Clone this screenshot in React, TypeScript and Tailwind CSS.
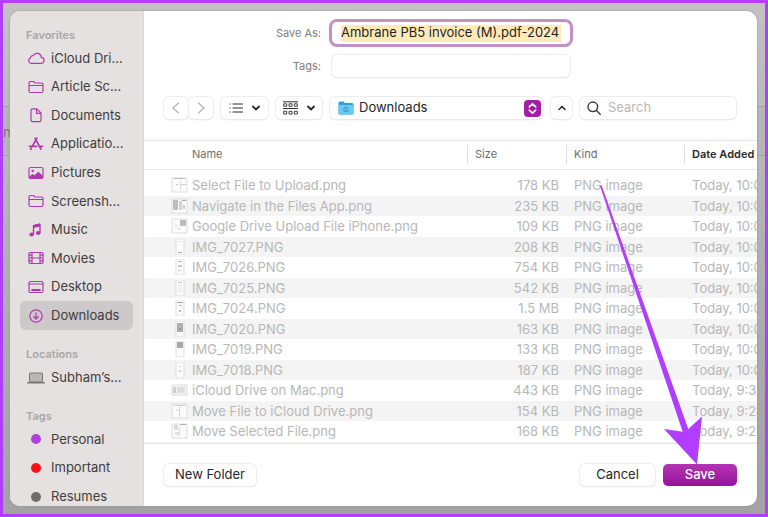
import type { ReactNode } from "react"
import clsx from "clsx"

type Shape = [x: number, y: number, w: number, h: number, fill: string]

const Icon = ({ children }: { children: ReactNode }) => (
  <svg
    viewBox="0 0 18 16"
    className="w-[18px] h-4 shrink-0"
    fill="none"
    stroke="#ad39ad"
    strokeWidth="1.2"
    strokeLinecap="round"
    strokeLinejoin="round"
  >
    {children}
  </svg>
)

const folderIcon = (
  <Icon>
    <path d="M2 12V4q0-1.500 1.500-1.500h3L8 4h6.500q1.500 0 1.500 1.500V12q0 1.500-1.500 1.500h-11Q2 13.500 2 12zM2 6.500h14" />
  </Icon>
)

const favorites = [
  {
    label: "iCloud Dri...",
    icon: (
      <Icon>
        <path d="M4.500 13.300h9.300a3 3 0 0 0 .500-6 4.400 4.400 0 0 0-8.300-1.600 2.600 2.600 0 0 0-2.700 2.600 2.600 2.600 0 0 0 1.200 5z" />
      </Icon>
    ),
  },
  { label: "Article Sc...", icon: folderIcon },
  {
    label: "Documents",
    icon: (
      <Icon>
        <path d="M4 13.200V3.300q0-1.500 1.500-1.500h4.300l4.200 4.200v7.200q0 1.500-1.500 1.500h-7Q4 14.700 4 13.200zM9.500 2v4.300h4.300" />
      </Icon>
    ),
  },
  {
    label: "Applicatio...",
    icon: (
      <Icon>
        <path strokeWidth="1.700" d="M9.900 2.200 5.500 10M8 2.200l5.900 11M2.500 10.300h7.300M13 10.300h2.500M4.300 12.300l-.6 1" />
      </Icon>
    ),
  },
  {
    label: "Pictures",
    icon: (
      <Icon>
        <rect x="2" y="2.500" width="14" height="11" rx="1.500" />
        <circle cx="5.700" cy="6" r="1.200" fill="#ad39ad" stroke="none" />
        <path d="M2.500 11.500 5.500 9l2 1.300 3.700-3.500 4.500 3.700v2.500h-13z" fill="#ad39ad" stroke="none" />
      </Icon>
    ),
  },
  { label: "Screensh...", icon: folderIcon },
  {
    label: "Music",
    icon: (
      <Icon>
        <path strokeWidth="1.400" d="M6.500 12V3.600l6.500-1.500v8.400" />
        <path d="M6.500 2.900 13 1.500v3L6.500 5.900z" fill="#ad39ad" stroke="none" />
        <ellipse cx="4.600" cy="12.500" rx="2.300" ry="1.900" fill="#ad39ad" stroke="none" />
        <ellipse cx="11.200" cy="11" rx="2.300" ry="1.900" fill="#ad39ad" stroke="none" />
      </Icon>
    ),
  },
  {
    label: "Movies",
    icon: (
      <Icon>
        <rect x="2" y="2.500" width="14" height="11" rx="1.200" />
        <path d="M5 2.500v11M13 2.500v11M5 8h8M2 5.200h3M2 8h3M2 10.800h3M13 5.200h3M13 8h3M13 10.800h3" />
      </Icon>
    ),
  },
  {
    label: "Desktop",
    icon: (
      <Icon>
        <rect x="2" y="2.500" width="14" height="11" rx="1.500" />
        <path d="M2 5h14" />
        <path d="M5 11h8" strokeWidth="1.800" />
      </Icon>
    ),
  },
  {
    label: "Downloads",
    active: true,
    icon: (
      <Icon>
        <circle cx="9" cy="8" r="6.200" />
        <path d="M9 4.800v6M6.700 8.700 9 11l2.300-2.300" />
      </Icon>
    ),
  },
]

const locations = [
  {
    label: "Subham’s...",
    icon: (
      <svg viewBox="0 0 18 16" className="w-[18px] h-4 shrink-0">
        <rect x="2.500" y="3" width="13" height="9" rx="1" fill="#b9b6b6" stroke="#777474" />
        <rect x="0" y="12" width="18" height="1.500" rx=".7" fill="#777474" />
      </svg>
    ),
  },
]

const dot = (cls: string) => (
  <span className="w-[18px] flex justify-center shrink-0">
    <span className={clsx("size-[10px] rounded-full", cls)} />
  </span>
)

const tags = [
  { label: "Personal", icon: dot("bg-[#ab42e0]") },
  { label: "Important", icon: dot("bg-[#fe1019]") },
  { label: "Resumes", icon: dot("bg-[#6f6c6c]") },
]

const wide: Shape = [1, 1, 15, 14, "#fbfbfb"]
const tall: Shape = [5, 0, 8, 16, "#fbfbfb"]

const files: { name: string; size: string; date: string; thumb: Shape[] }[] = [
  { name: "Select File to Upload.png", size: "178 KB", date: "Today, 10:0", thumb: [wide, [3, 1, 11, 1, "#bcbcbc"], [9, 4, 1, 9, "#dcdcdc"], [5, 7, 2, 1, "#d5b8d5"], [10, 7, 5, 1, "#cfcfcf"]] },
  { name: "Navigate in the Files App.png", size: "235 KB", date: "Today, 10:0", thumb: [wide, [2, 2, 5, 10, "#bdbdbd"], [8, 3, 3, 9, "#d3d3d3"], [11, 2, 4, 1, "#a8a8a8"], [12, 7, 2, 4, "#c9c9c9"]] },
  { name: "Google Drive Upload File iPhone.png", size: "109 KB", date: "Today, 10:0", thumb: [wide, [9, 2, 6, 6, "#bcbcbc"], [4, 7, 2, 2, "#dedede"], [7, 10, 2, 2, "#dedede"]] },
  { name: "IMG_7027.PNG", size: "208 KB", date: "Today, 10:0", thumb: [tall, [7, 2, 4, 1, "#e0e0e0"], [7, 13, 4, 1, "#a9a9a9"]] },
  { name: "IMG_7026.PNG", size: "754 KB", date: "Today, 10:0", thumb: [tall, [7, 2, 4, 1, "#b5b5b5"], [7, 6, 4, 2, "#cbcbcb"], [7, 11, 3, 1, "#c5c5c5"]] },
  { name: "IMG_7025.PNG", size: "542 KB", date: "Today, 10:0", thumb: [tall, [7, 2, 4, 1, "#c5c5c5"], [7, 4, 4, 9, "#f0f0f0"]] },
  { name: "IMG_7024.PNG", size: "1.5 MB", date: "Today, 10:0", thumb: [tall, [6, 2, 6, 1, "#a3a3a3"], [8, 5, 3, 1, "#bebebe"], [8, 10, 2, 2, "#b6b6b6"]] },
  { name: "IMG_7020.PNG", size: "163 KB", date: "Today, 10:0", thumb: [tall, [6, 2, 6, 9, "#b0b0b0"], [8, 7, 2, 2, "#969696"]] },
  { name: "IMG_7019.PNG", size: "133 KB", date: "Today, 10:0", thumb: [tall, [6, 1, 6, 6, "#a9a9a9"]] },
  { name: "IMG_7018.PNG", size: "187 KB", date: "Today, 10:0", thumb: [tall, [8, 4, 2, 1, "#d5d5d5"], [8, 8, 2, 2, "#d5d5d5"]] },
  { name: "iCloud Drive on Mac.png", size: "443 KB", date: "Today, 9:33", thumb: [[1, 3, 15, 10, "#f4f4f4"], [2, 5, 3, 6, "#cfcfcf"], [6, 5, 8, 6, "#dedede"]] },
  { name: "Move File to iCloud Drive.png", size: "154 KB", date: "Today, 9:28", thumb: [wide, [3, 2, 11, 1, "#cfcfcf"], [8, 3, 1, 11, "#d8d8d8"], [5, 6, 2, 2, "#e2e2e2"]] },
  { name: "Move Selected File.png", size: "168 KB", date: "Today, 9:27", thumb: [wide, [3, 2, 4, 5, "#dddddd"], [9, 1, 6, 1, "#adadad"], [8, 4, 1, 9, "#d8d8d8"], [4, 9, 4, 3, "#e0e0e0"]] },
]

const Thumb = ({ shapes }: { shapes: Shape[] }) => (
  <svg viewBox="0 0 17 16" className="w-[17px] h-4 shrink-0">
    {shapes.map(([x, y, width, height, fill], i) => (
      <rect key={i} x={x} y={y} width={width} height={height} fill={fill} stroke={i === 0 ? "#d8d8d8" : "none"} strokeWidth=".8" />
    ))}
  </svg>
)

const SideSection = ({
  title,
  items,
  className,
}: {
  title: string
  items: { label: string; icon: ReactNode; active?: boolean }[]
  className: string
}) => (
  <section className="mb-[15px]">
    <h2 className="h-[18px] pl-[6px] text-[11px] leading-[18px] font-semibold text-[#aaa6a6]">{title}</h2>
    <ul className={clsx("grid auto-rows-fr", className)}>
      {items.map((item) => (
        <li key={item.label} className="flex">
          <a
            href="#"
            className={clsx(
              "flex flex-1 items-center gap-[6px] pl-[7px] rounded-md text-[13px] whitespace-nowrap text-[#3f3c3d]",
              item.active && "bg-[#cdc9ca]"
            )}
          >
            {item.icon}
            {item.label}
          </a>
        </li>
      ))}
    </ul>
  </section>
)

const HeadCell = ({ children }: { children: ReactNode }) => (
  <div className="border-l border-[#dedede] pl-[7px] leading-[19px]">{children}</div>
)

const control = "flex h-[22px] items-center rounded-[5px] bg-white shadow-[0_0_1px_1px_#ececec,0_1px_1px_#cfcfcf]"

const ChevronDown = () => (
  <svg viewBox="0 0 10 10" className="size-[10px]" fill="none" stroke="#262626" strokeWidth="1.800" strokeLinecap="round" strokeLinejoin="round">
    <path d="M2 3.500 5 6.500l3-3" />
  </svg>
)

export default function App() {
  return (
    <div className="relative h-screen overflow-hidden border-[3px] border-[#b13eff] bg-linear-to-b from-[#c2c2c2] via-[#b0b0b0] to-[#a2a2a2] p-2 pl-[7px] font-[Inter,sans-serif]">
      <div className="absolute inset-x-0 top-[103px] h-[50px] border-y border-[#a3a3a3] bg-[#b6b5b5] text-[14px] leading-[50px] text-[#7a7878]">
        m
      </div>

      <div role="dialog" aria-label="Save" className="relative flex h-full overflow-hidden rounded-[10px] bg-white shadow-[0_0_2px_#8a8a8a]">
        <nav className="w-[134px] shrink-0 overflow-hidden border-r border-[#d9d5d5] bg-[#e5e1e1] px-[10px] pt-[15px]">
          <SideSection title="Favorites" items={favorites} className="h-[286px]" />
          <SideSection title="Locations" items={locations} className="h-[29px]" />
          <SideSection title="Tags" items={tags} className="h-[86px]" />
        </nav>

        <form className="flex min-w-0 flex-1 flex-col" onSubmit={(e) => e.preventDefault()}>
          <div className="grid grid-cols-[177px_238px] gap-x-[11px] gap-y-[11px] pt-[11px] text-[#7f7d7d]">
            <label htmlFor="filename" className="text-right text-[11px] leading-[22px]">Save As:</label>
            <div className="flex h-[22px] items-center rounded-[5px] bg-white px-[9px] ring-3 ring-[#c491c4]">
              <input
                id="filename"
                defaultValue="Ambrane PB5 invoice (M).pdf-2024"
                className="h-[17px] w-full bg-[#feeab9] text-[13px] text-[#1f1f1f] outline-none"
              />
            </div>
            <label htmlFor="tags" className="text-right text-[11px] leading-[22px]">Tags:</label>
            <input id="tags" className={clsx(control, "w-full outline-none")} />
          </div>

          <div className="flex gap-2 pt-[20px] pr-[21px] pb-[21px] pl-5">
            <div className="flex gap-px">
              <button type="button" aria-label="Back" className={clsx(control, "w-6 justify-center")}>
                <svg viewBox="0 0 12 14" className="w-3 h-3.5" fill="none" stroke="#b5b5b5" strokeWidth="1.300" strokeLinecap="round" strokeLinejoin="round">
                  <path d="M8.500 2 3 7l5.500 5" />
                </svg>
              </button>
              <button type="button" aria-label="Forward" className={clsx(control, "w-6 justify-center")}>
                <svg viewBox="0 0 12 14" className="w-3 h-3.5" fill="none" stroke="#b5b5b5" strokeWidth="1.300" strokeLinecap="round" strokeLinejoin="round">
                  <path d="m3.500 2 5.500 5-5.500 5" />
                </svg>
              </button>
            </div>
            <button type="button" aria-label="List view" className={clsx(control, "w-[47px] justify-center gap-2")}>
              <svg viewBox="0 0 14 12" className="w-3.5 h-3" stroke="#2c2c2c" strokeWidth="1.200" strokeLinecap="round">
                <path d="M4 2h9.500M4 6h9.500M4 10h9.500M1 2h.2M1 6h.2M1 10h.2" />
              </svg>
              <ChevronDown />
            </button>
            <button type="button" aria-label="Group items" className={clsx(control, "w-[46px] justify-center gap-2")}>
              <svg viewBox="0 0 15 14" className="w-[15px] h-3.5" fill="none" stroke="#2c2c2c">
                <path d="M0 .8h15M0 7.500h15" />
                <path strokeWidth=".9" d="M.7 2.800h3v2.500h-3zM6 2.800h3v2.500H6zM11.300 2.800h3v2.500h-3zM.7 10.300h3v2.700h-3zM6 10.300h3v2.700H6zM11.300 10.300h3v2.700h-3z" />
              </svg>
              <ChevronDown />
            </button>
            <div className={clsx(control, "min-w-0 flex-1 gap-[5px] pr-[2px] pl-2")}>
              <svg viewBox="0 0 16 14" className="w-4 h-3.5 shrink-0">
                <path d="M.5 2Q.5.500 2 .5h3.500L7 2h7q1.500 0 1.500 1.500V12q0 1.500-1.500 1.500H2Q.5 13.500.5 12z" fill="#2d9fd9" />
                <path d="M.5 4h15v8q0 1.500-1.500 1.500H2Q.5 13.500.5 12z" fill="#6cc8f3" />
                <circle cx="8" cy="8.500" r="2.300" fill="none" stroke="#2e9cd4" strokeWidth="1" />
                <path d="M8 7.200v2.400M7 8.800l1 1 1-1" fill="none" stroke="#2e9cd4" strokeWidth=".7" />
              </svg>
              <select aria-label="Folder" className="min-w-0 flex-1 appearance-none text-[13px] text-[#262626] outline-none">
                <option>Downloads</option>
              </select>
              <svg viewBox="0 0 17 17" className="size-[17px] shrink-0" fill="none">
                <rect width="17" height="17" rx="4" fill="#a21fa5" />
                <path d="M5.300 6.800 8.500 3.800l3.200 3M5.300 10.200l3.200 3 3.200-3" stroke="#fff" strokeWidth="1.700" strokeLinecap="round" strokeLinejoin="round" />
              </svg>
            </div>
            <button type="button" aria-label="Collapse" className={clsx(control, "w-[21px] justify-center")}>
              <svg viewBox="0 0 10 10" className="size-[10px]" fill="none" stroke="#262626" strokeWidth="1.500" strokeLinecap="round" strokeLinejoin="round">
                <path d="M2 6.500 5 3.500l3 3" />
              </svg>
            </button>
            <label className={clsx(control, "w-[156px] gap-[7px] px-[7px]")}>
              <svg viewBox="0 0 14 14" className="size-3.5 shrink-0" fill="none" stroke="#3a3a3a" strokeWidth="1.400" strokeLinecap="round">
                <circle cx="5.800" cy="5.800" r="4.800" />
                <path d="m9.500 9.500 3.700 3.700" />
              </svg>
              <input type="search" aria-label="Search" placeholder="Search" className="w-full min-w-0 text-[13px] outline-none placeholder:text-[#b9b9b9]" />
            </label>
          </div>

          <div className="min-h-0 flex-1 overflow-hidden border-y border-[#e4e4e4] bg-[#f4f4f4]">
            <table className="w-full table-fixed bg-white text-left whitespace-nowrap">
              <colgroup>
                <col />
                <col className="w-[99px]" />
                <col className="w-[118px]" />
                <col className="w-[73px]" />
              </colgroup>
              <thead className="text-[11px] text-[#6c6c6c]">
                <tr className="h-7 border-b border-[#e8e8e8]">
                  <th className="py-0 pl-12 leading-[19px] font-normal">Name</th>
                  <th className="p-0 font-normal"><HeadCell>Size</HeadCell></th>
                  <th className="p-0 font-normal"><HeadCell>Kind</HeadCell></th>
                  <th className="p-0 font-semibold text-[#2a2a2a]"><HeadCell>Date Added</HeadCell></th>
                </tr>
              </thead>
              <tbody className="text-[13px] leading-5 text-[#b7b7b7] before:block before:h-[5px]">
                {files.map((file) => (
                  <tr key={file.name} className="odd:h-[21px] even:h-5 even:bg-[#f4f4f4]">
                    <td className="p-0">
                      <div className="flex items-center gap-1 pl-[27px]">
                        <Thumb shapes={file.thumb} />
                        {file.name}
                      </div>
                    </td>
                    <td className="py-0 pr-[7px] text-right">{file.size}</td>
                    <td className="py-0 pl-2">PNG image</td>
                    <td className="overflow-hidden py-0 pl-2">{file.date}</td>
                  </tr>
                ))}
              </tbody>
            </table>
          </div>

          <div className="flex gap-2 pt-5 pr-5 pb-[20px] pl-5 text-[13px] text-[#262626]">
            <button type="button" className={clsx(control, "w-[92px] justify-center")}>New Folder</button>
            <button type="button" className={clsx(control, "ml-auto w-[75px] justify-center")}>Cancel</button>
            <button type="submit" className="h-[22px] w-[74px] rounded-[5px] bg-linear-to-b from-[#b334b3] to-[#98119b] font-medium text-white">
              Save
            </button>
          </div>
        </form>

        <svg viewBox="0 0 104 284" className="pointer-events-none absolute right-[54px] bottom-[41px] h-[284px] w-[104px]" fill="#b13eff">
          <path d="M1 5 2.500 4 89.300 248 103 235.500 98 283.500 65 248 83.700 250.700z" />
        </svg>
      </div>
    </div>
  )
}
